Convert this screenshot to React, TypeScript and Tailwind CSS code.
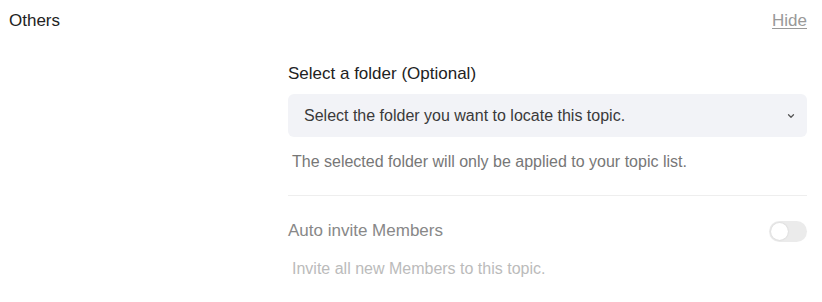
import { ChevronDown } from 'lucide-react'

export default function App() {
  return (
    <div className="w-[822px] h-[302px] bg-white font-['Liberation_Sans',Arial,sans-serif]">
      <div className="flex items-start justify-between pl-[9px] pr-[15px] pt-[9px]">
        <span className="text-[17px] leading-[24px] text-[#222]">Others</span>
        <button className="text-[17px] leading-[24px] text-[#999] underline underline-offset-2">Hide</button>
      </div>

      <div className="ml-[288px] mr-[15px] mt-[29px]">
        <div className="text-[17px] leading-[24px] text-[#222]">Select a folder (Optional)</div>
        <div className="mt-[8px] flex h-[43px] items-center justify-between rounded-[6px] bg-[#f2f3f7] pl-[16px] pr-[11px]">
          <span className="text-[16px] text-[#3a3a3a]">Select the folder you want to locate this topic.</span>
          <ChevronDown className="size-[10px] text-[#555]" strokeWidth={3} />
        </div>
        <div className="mt-[15px] pl-[4px] text-[16px] leading-[20px] text-[#777]">
          The selected folder will only be applied to your topic list.
        </div>
        <div className="mt-[23px] h-px bg-[#eeeeee]" />

        <div className="mt-[23px] flex items-center justify-between">
          <span className="text-[17px] leading-[24px] text-[#888]">Auto invite Members</span>
          <div className="flex h-[21px] w-[38px] items-center rounded-full bg-[#ebebeb] px-[2px]">
            <div className="size-[17px] rounded-full bg-white shadow-[0_0_2px_rgba(0,0,0,0.15)]" />
          </div>
        </div>
        <div className="mt-[16px] pl-[4px] text-[16px] leading-[20px] text-[#bbb]">
          Invite all new Members to this topic.
        </div>
      </div>
    </div>
  )
}
